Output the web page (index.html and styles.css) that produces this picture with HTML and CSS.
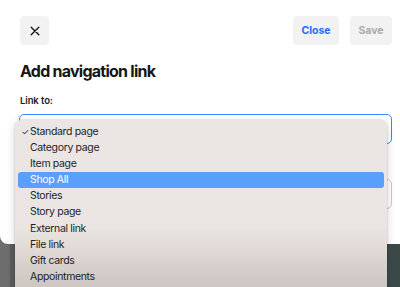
FILE: index.html
```html
<!DOCTYPE html>
<html>
<head>
<meta charset="utf-8">
<link rel="stylesheet" href="styles.css">
</head>
<body>
<div class="page">
  <div class="sheet">
    <div class="header">
      <button class="btn icon-btn" aria-label="Close">
        <svg width="10" height="10" viewBox="0 0 10 10"><path d="M1.2 1.2L8.8 8.8M8.8 1.2L1.2 8.8" stroke="#1a1a1a" stroke-width="1.4" stroke-linecap="round"/></svg>
      </button>
      <div class="actions">
        <button class="btn text-btn close">Close</button>
        <button class="btn text-btn save">Save</button>
      </div>
    </div>
    <h1 class="title">Add navigation link</h1>
    <div class="label">Link to:</div>
    <div class="field active"></div>
    <div class="field second"></div>
  </div>
  <div class="backdrop"><div class="back-left"></div><div class="back-right"></div></div>
  <ul class="menu">
    <li class="item checked"><span class="check">✓</span>Standard page</li>
    <li class="item">Category page</li>
    <li class="item">Item page</li>
    <li class="item selected">Shop All</li>
    <li class="item">Stories</li>
    <li class="item">Story page</li>
    <li class="item">External link</li>
    <li class="item">File link</li>
    <li class="item">Gift cards</li>
    <li class="item">Appointments</li>
  </ul>
</div>
</body>
</html>
```
FILE: styles.css
```css
* { box-sizing: border-box; }
html, body { margin: 0; padding: 0; }
body {
  width: 400px;
  height: 287px;
  overflow: hidden;
  background: #6d6d6d;
  font-family: Inter, "Noto Sans", "Liberation Sans", sans-serif;
}
.page { position: relative; width: 400px; height: 287px; }
.sheet {
  background: #fff;
  height: 244px;
  padding: 16px 8px 0 19px;
  border-radius: 0 0 0 8px;
}
.header { display: flex; justify-content: space-between; align-items: center; padding-left: 1px; }
.btn {
  border: none;
  background: #f2f2f2;
  border-radius: 4px;
  height: 29px;
  font-family: inherit;
  padding: 0;
  display: flex; align-items: center; justify-content: center;
}
.icon-btn { width: 29px; }
.actions { display: flex; gap: 11px; }
.text-btn { font-size: 10.5px; font-weight: 700; }
.close { width: 46px; color: #1f6ff2; }
.save { width: 42px; color: #a9a9a9; }
.title {
  margin: 16px 0 0 1px;
  font-size: 16px;
  font-weight: 700;
  color: #161616;
  letter-spacing: -0.75px;
}
.label {
  margin: 14px 0 0 1px;
  font-size: 9.5px;
  font-weight: 600;
  color: #222;
  letter-spacing: -0.1px;
}
.field {
  height: 30px;
  border-radius: 5px;
  border: 1px solid #c8c8c8;
}
.field.active { margin-top: 8px; border: 1.5px solid #3d86f5; }
.field.second { margin-top: 35px; }
.backdrop {
  display: flex;
  height: 43px;
}
.back-left { width: 10px; background: #6d6d6d; }
.back-right { flex: 1; background: linear-gradient(90deg, #5c5c5c 0%, #4a4f4e 60%, #3b4a48 100%); }
.menu {
  position: absolute;
  left: 15px;
  top: 120px;
  width: 372px;
  height: 180px;
  margin: 0;
  padding: 3.5px 3px;
  list-style: none;
  border-radius: 6px;
  background: linear-gradient(180deg, #ebe6e3 0%, #eae5e2 60%, #e0d9d5 72%, #d0c9c5 88%, #c8c2be 100%);
  box-shadow: 0 0 0 0.5px rgba(0,0,0,0.12), 0 3px 10px rgba(0,0,0,0.18);
}
.item {
  position: relative;
  height: 16.2px;
  line-height: 16.2px;
  padding-left: 12px;
  font-size: 10.5px;
  letter-spacing: -0.35px;
  color: #1e1e1e;
  border-radius: 3px;
}
.item.selected { background: #5b9ffc; color: #fff; }
.check { position: absolute; left: 3.5px; top: 0; font-size: 8.5px; }
```
